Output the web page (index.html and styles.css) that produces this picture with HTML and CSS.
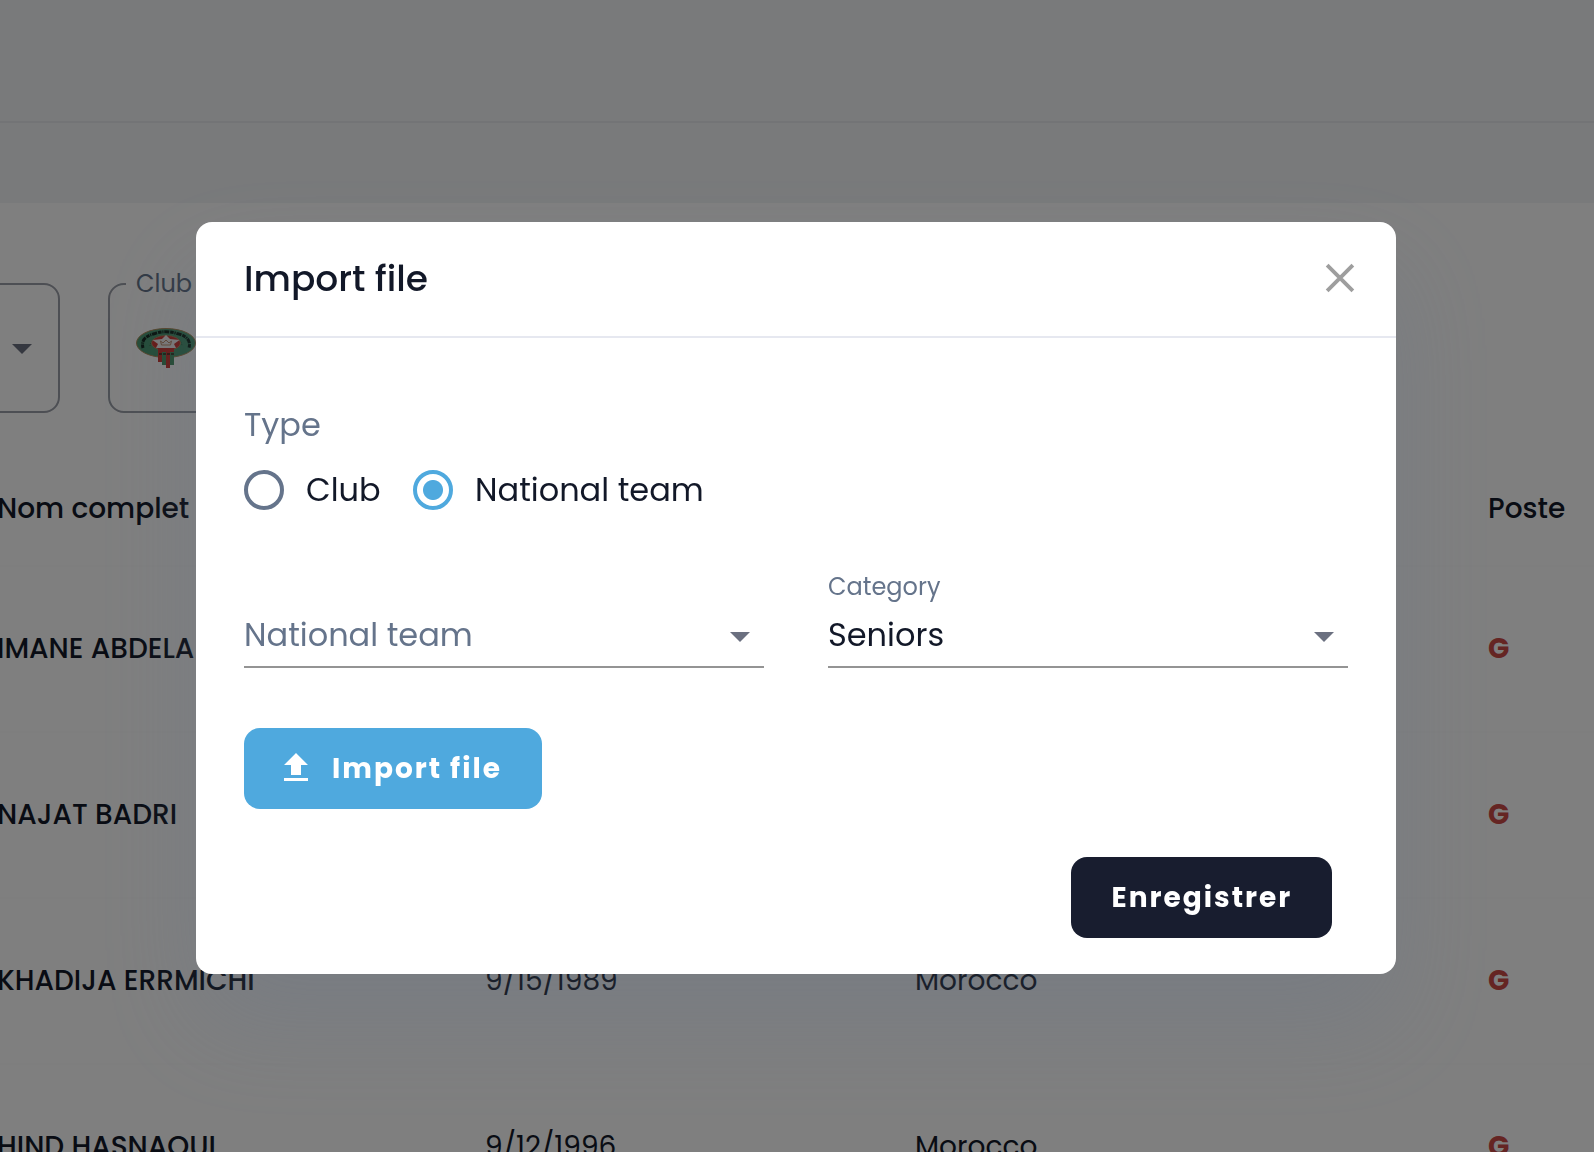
FILE: index.html
```html
<!DOCTYPE html>
<html lang="fr">
<head>
<meta charset="utf-8">
<title>Import file</title>
<link rel="stylesheet" href="styles.css">
</head>
<body>
<div class="page">
  <div class="topbar"></div>
  <div class="subbar"></div>
  <div class="filters">
    <div class="filter filter-first"><svg class="caret" viewBox="0 0 20 10"><path d="M0 0h20L10 10z"/></svg></div>
    <div class="filter filter-club">
      <span class="filter-label">Club</span>
      <svg class="crest" viewBox="0 0 60 40">
        <ellipse cx="30" cy="15" rx="29.5" ry="14.5" fill="#4a9872" stroke="#b08a58"/>
        <path d="M7 20Q4 9 19 5.500Q30 2 41 5.500Q56 9 53 20" fill="none" stroke="#14281f" stroke-width="3" stroke-dasharray="3.500 .8 1.200 .8 5 1"/>
        <path d="M14 18Q15 8 30 8Q45 8 46 18" fill="none" stroke="#2f6b4c" stroke-width="1" stroke-dasharray="1 1"/>
        <ellipse cx="30" cy="15" rx="14.500" ry="7.500" fill="#cc3630" stroke="#c09a68" stroke-width=".6"/>
        <path d="M30 7l4 4 9.500 1-5.500 4 2 4H20l2-4-5.500-4 9.500-1z" fill="#f4f0f0"/>
        <path d="M24.500 13l2.500 2 3-3 3 3 2.500-2-1 4h-9z" fill="none" stroke="#c09070"/>
        <path d="M22 20h4v14h-4zM30 20h4v20h-4z" fill="#cc3630"/>
        <path d="M26 22h4v15h-4zM34 20h4v17h-4z" fill="#4a9468"/>
        <path d="M22 20h16v4H22z" fill="#cc3630"/>
        <path d="M23 26h15" stroke="#3a2c20" stroke-width="1.500" stroke-dasharray="3 1"/>
      </svg>
    </div>
  </div>
  <div class="table">
    <div class="row head"><span class="name">Nom complet</span><span class="date"></span><span class="country"></span><span class="post">Poste</span></div>
    <div class="row"><span class="name">IMANE ABDELA</span><span class="date"></span><span class="country"></span><span class="post g">G</span></div>
    <div class="row"><span class="name">NAJAT BADRI</span><span class="date"></span><span class="country"></span><span class="post g">G</span></div>
    <div class="row"><span class="name">KHADIJA ERRMICHI</span><span class="date">9/15/1989</span><span class="country">Morocco</span><span class="post g">G</span></div>
    <div class="row"><span class="name">HIND HASNAOUI</span><span class="date">9/12/1996</span><span class="country">Morocco</span><span class="post g">G</span></div>
  </div>
</div>
<div class="overlay">
  <div class="modal">
    <div class="modal-head">
      <h2 class="title">Import file</h2>
      <svg class="close" viewBox="0 0 28 28"><path d="M2 2l24 24M26 2L2 26"/></svg>
    </div>
    <div class="modal-body">
      <div class="type-label">Type</div>
      <div class="radios">
        <span class="radio"></span><span class="radio-text radio-club">Club</span>
        <span class="radio on"></span><span class="radio-text">National team</span>
      </div>
      <div class="selects">
        <div class="select">
          <div class="select-label"></div>
          <div class="select-row"><span class="placeholder">National team</span><svg class="caret" viewBox="0 0 20 10"><path d="M0 0h20L10 10z"/></svg></div>
        </div>
        <div class="select">
          <div class="select-label">Category</div>
          <div class="select-row"><span>Seniors</span><svg class="caret" viewBox="0 0 20 10"><path d="M0 0h20L10 10z"/></svg></div>
        </div>
      </div>
      <div class="btn btn-import"><svg class="upload" viewBox="0 0 24 28"><path d="M12 0L0 12h7v10h10V12h7zM0 25h24v3H0z"/></svg><span>Import file</span></div>
      <div class="actions"><div class="btn btn-save"><span>Enregistrer</span></div></div>
    </div>
  </div>
</div>
</body>
</html>
```
FILE: styles.css
```css
* { box-sizing: border-box; }
body {
  margin: 0;
  width: 1594px;
  height: 1152px;
  overflow: hidden;
  background: #fff;
  color: #121828;
  font-family: Poppins, Inter, "Open Sans", sans-serif;
  font-size: 32px;
  line-height: 40px;
}
span, h2 { white-space: nowrap; }
.page { height: 1152px; overflow: hidden; }
.topbar { height: 123px; background: #f3f4f6; border-bottom: 2px solid #e6e8ec; }
.subbar { height: 80px; background: #f3f4f6; }
.filters { display: flex; gap: 48px; padding-top: 80px; height: 254px; }
.filter { height: 130px; border: 2px solid #9b9fa8; border-radius: 16px; }
.filter-first { width: 80px; margin-left: -20px; padding: 59px 26px 0 30px; }
.filter-club { position: relative; width: 400px; padding: 43px 26px; }
.filter-label {
  position: absolute;
  left: 16px;
  top: -21px;
  padding: 0 10px;
  background: #fff;
  color: #65748b;
  font-size: 24px;
}
.caret { display: block; width: 20px; height: 10px; fill: #6b7080; }
.crest { display: block; width: 60px; height: 40px; }
.row {
  display: grid;
  grid-template-columns: 484px 430px 573px 106px;
  align-items: center;
  height: 166px;
  padding-left: 1px;
  border-bottom: 2px solid #fcfcfd;
  font-size: 28px;
}
.row.head { height: 110px; padding-bottom: 4px; }
.name { margin-left: -4px; font-weight: 500; }
.post { font-weight: 500; }
.post.g { color: #cb4b46; font-weight: 700; }

.overlay {
  position: fixed;
  inset: 0;
  display: flex;
  justify-content: flex-start;
  align-items: flex-start;
  padding: 222px 0 0 196px;
  background: rgba(0, 0, 0, .5);
}
.modal {
  width: 1200px;
  height: 752px;
  border-radius: 16px;
  background: #fff;
  box-shadow: 0 50px 100px rgba(100, 116, 139, .25);
}
.modal-head {
  display: flex;
  justify-content: space-between;
  align-items: center;
  height: 116px;
  padding: 0 41px 2px 48px;
  border-bottom: 2px solid #e6e8f0;
}
.title { margin: 2px 0 0; font-size: 36px; font-weight: 500; }
.close { width: 30px; height: 30px; fill: none; stroke: #9e9e9e; stroke-width: 3.600; }
.modal-body { padding: 67px 48px 0; }
.type-label { color: #65748b; }
.radios { display: flex; align-items: center; height: 40px; margin-top: 25px; }
.radio { width: 40px; height: 40px; border: 4px solid #65748b; border-radius: 50%; }
.radio.on { border-color: #4fa9de; background: radial-gradient(circle, #4fa9de 9.500px, transparent 10.500px); }
.radio-text { margin-left: 22px; }
.radio-club { width: 107px; }
.selects { display: grid; grid-template-columns: 520px 520px; gap: 64px; margin-top: 57px; }
.select-label { height: 43px; color: #65748b; font-size: 24px; }
.select-row {
  display: flex;
  justify-content: space-between;
  align-items: center;
  height: 58px;
  padding: 0 14px 6px 0;
  border-bottom: 2px solid #949494;
}
.select-row .caret { margin-top: 4px; }
.placeholder { color: #65748b; }
.btn {
  display: flex;
  align-items: center;
  height: 81px;
  border-radius: 16px;
  color: #fff;
  font-size: 28px;
  font-weight: 700;
  letter-spacing: 2px;
}
.btn-import { width: 298px; margin-top: 60px; padding-left: 40px; gap: 24px; background: #4fa9de; }
.upload { width: 24px; height: 28px; margin-bottom: 3px; fill: #fff; }
.actions { display: flex; justify-content: flex-end; padding: 48px 16px 0 0; }
.btn-save { width: 261px; padding-left: 40.500px; background: #181d2f; }
```
